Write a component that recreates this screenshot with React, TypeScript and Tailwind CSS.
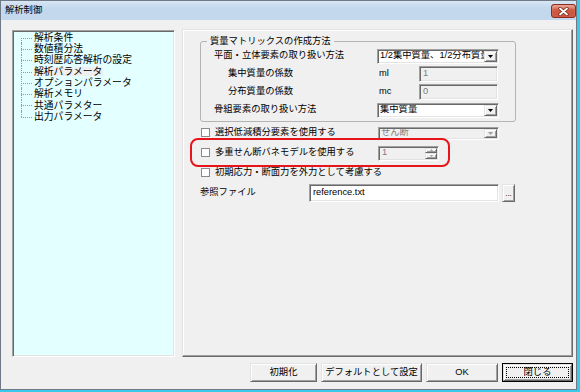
import React from 'react';

const sunken =
  'border border-t-[#a0a0a0] border-l-[#a0a0a0] border-b-white border-r-white shadow-[inset_1px_1px_0_#696969,inset_-1px_-1px_0_#e3e3e3]';
const raised =
  'border border-t-[#e3e3e3] border-l-[#e3e3e3] border-b-[#696969] border-r-[#696969] shadow-[inset_1px_1px_0_#ffffff,inset_-1px_-1px_0_#a0a0a0]';

const treeItems = [
  '解析条件',
  '数値積分法',
  '時刻歴応答解析の設定',
  '解析パラメータ',
  'オプションパラメータ',
  '解析メモリ',
  '共通パラメター',
  '出力パラメータ',
];

function Arrow({ disabled }: { disabled?: boolean }) {
  return (
    <svg width="5" height="3" viewBox="0 0 5 3">
      <path d="M0 0H5L2.5 3Z" fill={disabled ? '#a0a0a0' : '#000'} />
    </svg>
  );
}

function Combo({ text, disabled, size }: { text: string; disabled?: boolean; size: string }) {
  return (
    <div
      className={`${sunken} ${size} flex items-stretch p-[1px] ${
        disabled ? 'bg-[#f0f0f0] text-[#7d7d7d]' : 'bg-white text-black'
      }`}
    >
      <div className="flex-1 min-w-0 overflow-hidden whitespace-nowrap pl-[1px] flex items-center leading-none">
        {text}
      </div>
      <div className={`${raised} w-[13px] bg-[#f0f0f0] flex items-center justify-center`}>
        <Arrow disabled={disabled} />
      </div>
    </div>
  );
}

function Check() {
  return <div className="w-[9px] h-[9px] border border-[#8a8a8a] bg-white shrink-0" />;
}

function Field({ value, size }: { value: string; size: string }) {
  return (
    <div className={`${sunken} ${size} bg-[#f0f0f0] text-[#7d7d7d] flex items-center pl-[3px] leading-none`}>
      {value}
    </div>
  );
}

function Btn({ label, size, def }: { label: string; size: string; def?: boolean }) {
  if (def) {
    return (
      <div className={`${size} h-full border border-black`}>
        <div className={`${raised} h-full bg-[#f0f0f0] p-[2px]`}>
          <div className="h-full border border-dotted border-black flex items-center justify-center leading-none">
            {label}
          </div>
        </div>
      </div>
    );
  }
  return (
    <div className={`${raised} ${size} h-full bg-[#f0f0f0] flex items-center justify-center leading-none`}>
      {label}
    </div>
  );
}

export default function App() {
  return (
    <div className="w-[580px] h-[392px] bg-[#38c9ec] font-['Liberation_Sans','Noto_Sans_CJK_JP',sans-serif] text-[9.3px] text-black">
      <div className="w-[577px] h-[390px] border border-[#6f7a86] bg-[#f0f0f0] flex flex-col">
        {/* title bar */}
        <div className="h-[19px] shrink-0 bg-[#c3d7ed] shadow-[inset_0_6px_6px_-3px_#dde9f6] flex items-start justify-between">
          <div className="pl-[4px] h-[19px] flex items-center leading-none">解析制御</div>
          <div className="mt-[3px] w-[25px] h-[14px] rounded-[3px] border border-[#8c2f22] bg-[#cf5741] shadow-[inset_0_4px_3px_-1px_#e8a090] flex items-center justify-center">
            <svg width="11" height="9" viewBox="0 0 11 9">
              <path d="M2 1.5L9 7.5M9 1.5L2 7.5" stroke="#6b2216" strokeWidth="3.2" strokeLinecap="round" />
              <path d="M2 1.5L9 7.5M9 1.5L2 7.5" stroke="#fff" strokeWidth="1.8" strokeLinecap="round" />
            </svg>
          </div>
        </div>

        {/* body */}
        <div className="flex-1 flex flex-col pt-[9px] pb-[7px] pl-[11px] pr-[3px]">
          <div className="flex-1 flex gap-[7px]">
            {/* tree */}
            <div className={`${sunken} w-[163px] mt-[1px] bg-[#e3ffff] pt-[1px] text-[9.8px]`}>
              {treeItems.map((t, i) => (
                <div key={t} className="h-[11.3px] flex items-stretch">
                  <div className="relative w-[13px] ml-[8px] shrink-0">
                    <span
                      className={`absolute left-0 border-l border-dotted border-[#9a9a9a] ${
                        i === 0 ? 'top-1/2 bottom-0' : i === treeItems.length - 1 ? 'top-0 bottom-1/2' : 'top-0 bottom-0'
                      }`}
                    />
                    <span className="absolute left-0 top-1/2 w-[11px] border-t border-dotted border-[#9a9a9a]" />
                  </div>
                  <div className="flex items-center leading-none">
                    <span className={i === 3 ? 'bg-[#efefef] pr-[1px]' : ''}>{t}</span>
                  </div>
                </div>
              ))}
            </div>

            {/* settings panel */}
            <div className="relative flex-1 border border-t-[#e3e3e3] border-l-[#e3e3e3] border-b-[#696969] border-r-[#696969] shadow-[inset_-1px_-1px_0_#a0a0a0,inset_1px_1px_0_#ffffff] pl-[17px] pt-[5px]">
              <fieldset className="w-[316px] border border-[#b4b4b4] rounded-[3px] pb-[2px]">
                <legend className="ml-[6px] px-[3px] leading-[12px]">質量マトリックスの作成方法</legend>
                <div className="h-[18px] flex items-center">
                  <div className="w-[176px] pl-[13px] leading-none">平面・立体要素の取り扱い方法</div>
                  <Combo text="1/2集中質量、1/2分布質量" size="w-[122px] h-[15px]" />
                </div>
                <div className="h-[18px] flex items-center">
                  <div className="w-[176px] pl-[27px] leading-none">集中質量の係数</div>
                  <div className="w-[42px] pl-[2px] leading-none">ml</div>
                  <Field value="1" size="w-[79px] h-[16px]" />
                </div>
                <div className="h-[18px] flex items-center">
                  <div className="w-[176px] pl-[27px] leading-none">分布質量の係数</div>
                  <div className="w-[42px] pl-[2px] leading-none">mc</div>
                  <Field value="0" size="w-[79px] h-[16px]" />
                </div>
                <div className="h-[18px] flex items-center">
                  <div className="w-[176px] pl-[13px] leading-none">骨組要素の取り扱い方法</div>
                  <Combo text="集中質量" size="w-[122px] h-[15px]" />
                </div>
              </fieldset>

              <div className="mt-[1px] h-[20px] flex items-center">
                <div className="w-[178px] flex items-center gap-[5px] pl-[1px]">
                  <Check />
                  <span className="leading-none">選択低減積分要素を使用する</span>
                </div>
                <Combo text="せん断" disabled size="w-[121px] h-[13px]" />
              </div>
              <div className="h-[20px] flex items-center">
                <div className="w-[178px] flex items-center gap-[5px] pl-[1px]">
                  <Check />
                  <span className="leading-none">多重せん断バネモデルを使用する</span>
                </div>
                <div className={`${sunken} w-[61px] h-[15px] bg-[#f0f0f0] text-[#7d7d7d] flex items-stretch p-[1px]`}>
                  <div className="flex-1 flex items-center pl-[2px] leading-none">1</div>
                  <div className="w-[12px] flex flex-col">
                    <div className={`${raised} flex-1 flex items-center justify-center`}>
                      <svg width="3" height="2" viewBox="0 0 3 2">
                        <path d="M0 2H3L1.5 0Z" fill="#a0a0a0" />
                      </svg>
                    </div>
                    <div className={`${raised} flex-1 flex items-center justify-center`}>
                      <svg width="3" height="2" viewBox="0 0 3 2">
                        <path d="M0 0H3L1.5 2Z" fill="#a0a0a0" />
                      </svg>
                    </div>
                  </div>
                </div>
              </div>
              <div className="h-[20px] flex items-center">
                <div className="flex items-center gap-[5px] pl-[1px]">
                  <Check />
                  <span className="leading-none">初期応力・断面力を外力として考慮する</span>
                </div>
              </div>
              <div className="h-[19px] flex items-center">
                <div className="w-[109px] leading-none">参照ファイル</div>
                <div className={`${sunken} w-[190px] h-[18px] bg-white flex items-center pl-[3px] leading-none`}>
                  reference.txt
                </div>
                <div className={`${raised} ml-[3px] w-[13px] h-[18px] bg-[#f0f0f0] flex items-end justify-center pb-[3px] leading-none text-[8px]`}>
                  ...
                </div>
              </div>

              {/* red annotation */}
              <div className="absolute left-[7px] top-[108px] w-[260px] h-[29px] border-2 border-[#e8141b] rounded-[8px] pointer-events-none" />
            </div>
          </div>

          {/* buttons */}
          <div className="h-[19px] mt-[6px] flex justify-end gap-[4px]">
            <Btn label="初期化" size="w-[67px]" />
            <Btn label="デフォルトとして設定" size="w-[101px]" />
            <Btn label="OK" size="w-[72px]" />
            <Btn label="閉じる" size="w-[71px]" def />
          </div>
        </div>
      </div>
    </div>
  );
}
